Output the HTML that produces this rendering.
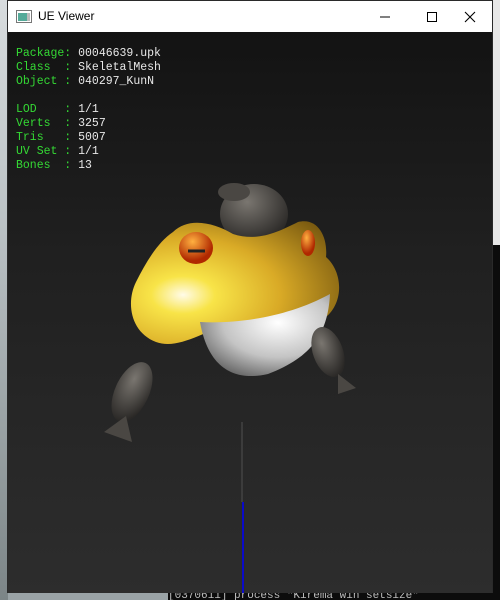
<!DOCTYPE html>
<html><head><style>
body{margin:0;width:500px;height:600px;overflow:hidden;background:#9aa3a6;position:relative;font-family:"Liberation Sans",sans-serif}
.bgL{position:absolute;left:0;top:0;width:8px;height:600px;background:linear-gradient(#d8dcde,#b9c0c3 40%,#7c8587)}
.bgR{position:absolute;left:492px;top:0;width:8px;height:245px;background:#e8e8e8}
.con{position:absolute;left:492px;top:245px;width:8px;height:355px;background:#0c0c0c}
.conB{position:absolute;left:168px;top:592px;width:332px;height:8px;background:#0c0c0c;color:#bcbcbc;font:11px "Liberation Mono",monospace;line-height:8px;overflow:hidden;white-space:nowrap}
.win{position:absolute;left:7px;top:0;width:486px;height:593px;background:#1a1a1a;border:1px solid #2a2a2a;box-sizing:border-box}
.title{position:absolute;left:0;top:0;width:484px;height:31px;background:#fff}
.title span{position:absolute;left:30px;top:8px;font-size:12px;color:#000}
.vp{position:absolute;left:0;top:31px;width:484px;height:561px;background:linear-gradient(#131313,#202020 40%,#2d2d2d)}
.txt{position:absolute;left:8px;top:15px;font:11.5px "Liberation Mono","DejaVu Sans Mono",monospace;line-height:14px;color:#e8e8e8;white-space:pre}
.g{color:#34d934}
</style></head><body>
<div class="bgL"></div><div class="bgR"></div><div class="con"></div>
<div class="conB">[0370611] process "Kirema win setsize"</div>
<div class="win">
 <div class="title">
  <svg style="position:absolute;left:8px;top:9px" width="16" height="13"><rect x="0.5" y="0.5" width="15" height="12" fill="#fff" stroke="#777"/><rect x="2" y="3" width="9" height="8" fill="#5a9"/><rect x="11" y="3" width="3" height="8" fill="#bbb"/></svg>
  <span>UE Viewer</span>
  <svg style="position:absolute;left:368px;top:10px" width="70" height="12"><line x1="4" y1="6" x2="14" y2="6" stroke="#000"/><rect x="51.5" y="1.5" width="9" height="9" fill="none" stroke="#000"/></svg>
  <svg style="position:absolute;left:456px;top:10px" width="12" height="12"><path d="M1 1L11 11M11 1L1 11" stroke="#000" stroke-width="1.1"/></svg>
 </div>
 <div class="vp">
  <div class="txt"><span class="g">Package:</span> 00046639.upk
<span class="g">Class  :</span> SkeletalMesh
<span class="g">Object :</span> 040297_KunN

<span class="g">LOD    :</span> 1/1
<span class="g">Verts  :</span> 3257
<span class="g">Tris   :</span> 5007
<span class="g">UV Set :</span> 1/1
<span class="g">Bones  :</span> 13</div>
  <svg style="position:absolute;left:0;top:0" width="484" height="561">
   <defs>
    <radialGradient id="y" cx="0.25" cy="0.6" r="0.85"><stop offset="0" stop-color="#fffbe8"/><stop offset="0.18" stop-color="#f8e448"/><stop offset="0.55" stop-color="#d9aa26"/><stop offset="1" stop-color="#7a5a10"/></radialGradient>
    <radialGradient id="w" cx="0.6" cy="0.35" r="0.7"><stop offset="0" stop-color="#ffffff"/><stop offset="0.6" stop-color="#c4c4c4"/><stop offset="1" stop-color="#6a6a6a"/></radialGradient>
    <radialGradient id="d" cx="0.4" cy="0.3" r="0.7"><stop offset="0" stop-color="#7a7670"/><stop offset="1" stop-color="#2a2826"/></radialGradient>
    <radialGradient id="e" cx="0.4" cy="0.3" r="0.6"><stop offset="0" stop-color="#ffb040"/><stop offset="1" stop-color="#b02800"/></radialGradient>
   </defs>
   <line x1="234" y1="390" x2="234" y2="470" stroke="#505050"/>
   <line x1="235" y1="470" x2="235" y2="561" stroke="#0000ff" stroke-width="1.5"/>
   <ellipse cx="246" cy="182" rx="34" ry="30" fill="url(#d)"/>
   <ellipse cx="226" cy="160" rx="16" ry="9" fill="#4a4743"/>
   <path d="M165 200 C180 185 205 190 225 202 C250 210 270 200 290 190 C310 185 320 205 318 225 C335 240 336 270 318 285 C300 300 260 290 225 290 C195 300 170 318 148 310 C122 300 118 270 128 250 C138 230 150 210 165 200Z" fill="url(#y)"/>
   <path d="M192 290 C230 292 280 285 322 262 C320 300 305 325 260 342 C225 350 200 335 192 290Z" fill="url(#w)"/>
   <ellipse cx="188" cy="216" rx="17" ry="16" fill="url(#e)"/>
   <line x1="180" y1="219" x2="197" y2="219" stroke="#222" stroke-width="3"/>
   <ellipse cx="300" cy="211" rx="7" ry="13" fill="url(#e)"/>
   <ellipse cx="124" cy="360" rx="17" ry="32" fill="url(#d)" transform="rotate(25 124 360)"/>
   <path d="M96 400 L118 384 L124 410Z" fill="#4a4743"/>
   <ellipse cx="320" cy="320" rx="15" ry="26" fill="url(#d)" transform="rotate(-20 320 320)"/>
   <path d="M330 342 L348 356 L330 362Z" fill="#4a4743"/>
  </svg>
 </div>
</div>
</body></html>
